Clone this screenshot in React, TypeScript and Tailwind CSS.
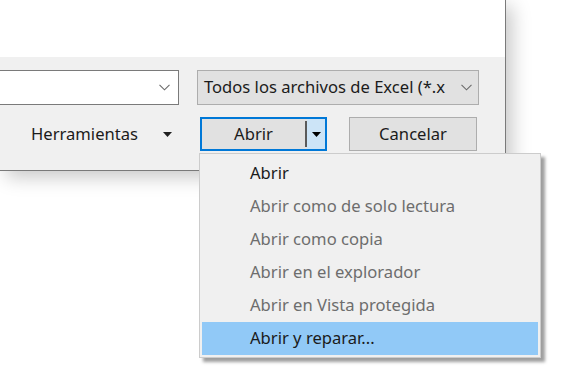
import React from 'react'

const Chevron = () => (
    <svg width="11" height="7" viewBox="0 0 11 7" fill="none">
        <polyline points="0.5,0.8 5.5,5.8 10.5,0.8" stroke="#6b6b6b" strokeWidth="1.1" />
    </svg>
)

const Caret = ({ color = '#202020' }: { color?: string }) => (
    <svg width="9" height="5" viewBox="0 0 9 5">
        <polygon points="0,0 9,0 4.5,5" fill={color} />
    </svg>
)

const items = [
    { label: 'Abrir', enabled: true },
    { label: 'Abrir como de solo lectura', enabled: false },
    { label: 'Abrir como copia', enabled: false },
    { label: 'Abrir en el explorador', enabled: false },
    { label: 'Abrir en Vista protegida', enabled: false },
    { label: 'Abrir y reparar...', enabled: true, active: true },
]

export default function App() {
    return (
        <div
          className="relative w-[565px] h-[379px] bg-white overflow-hidden text-[16.6px] text-[#1b1b1b]"
          style={{ fontFamily: '"Noto Sans", "Open Sans", sans-serif' }}
        >
            {/* dialog */}
            <div className="w-[506px] h-[171px] flex flex-col border-r border-b border-[#7a7a7a] shadow-[6px_6px_18px_rgba(0,0,0,0.22)]">
                <div className="h-[57px] bg-white" />
                <div className="flex-1 bg-[#f0f0f0] pt-[13px] flex flex-col gap-[12px]">
                    <div className="flex h-[35px]">
                        <div className="w-[179px] h-full bg-white border border-l-0 border-[#7a7a7a] flex items-center justify-end pr-[8px]">
                            <Chevron />
                        </div>
                        <div className="ml-[18px] w-[282px] h-full bg-[#e1e1e1] border border-[#adadad] flex items-center justify-between pl-[6px] pr-[6px]">
                            <span className="whitespace-nowrap">Todos los archivos de Excel (*.x</span>
                            <Chevron />
                        </div>
                    </div>
                    <div className="flex h-[34px] items-center">
                        <div className="w-[200px] h-full flex items-center pl-[31px] gap-[25px]">
                            <span>Herramientas</span>
                            <Caret />
                        </div>
                        <div className="w-[127px] h-full flex border-2 border-[#0078d7] bg-[#e1e1e1]">
                            <div className="flex-1 flex items-center justify-center">Abrir</div>
                            <div className="w-[2px] bg-[#5a5a5a] my-[2px]" />
                            <div className="w-[18px] bg-[#cce4f7] flex items-center justify-center">
                                <Caret color="#000" />
                            </div>
                        </div>
                        <div className="ml-[22px] w-[128px] h-full bg-[#e1e1e1] border border-[#adadad] flex items-center justify-center">
                            Cancelar
                        </div>
                    </div>
                </div>
            </div>

            {/* dropdown menu */}
            <div className="absolute left-[199px] top-[153px] w-[342px] bg-[#f0f0f0] border border-[#cccccc] pt-[3px] pb-[2px] px-[2px] shadow-[4px_4px_3px_rgba(0,0,0,0.38)]">
                {items.map((it) => (
                    <div
                      key={it.label}
                      className={`h-[33px] flex items-center pl-[48px] ${it.active ? 'bg-[#91c9f7]' : ''} ${it.enabled ? 'text-[#1b1b1b]' : 'text-[#6d6d6d]'}`}
                    >
                        {it.label}
                    </div>
                ))}
            </div>
        </div>
    )
}
